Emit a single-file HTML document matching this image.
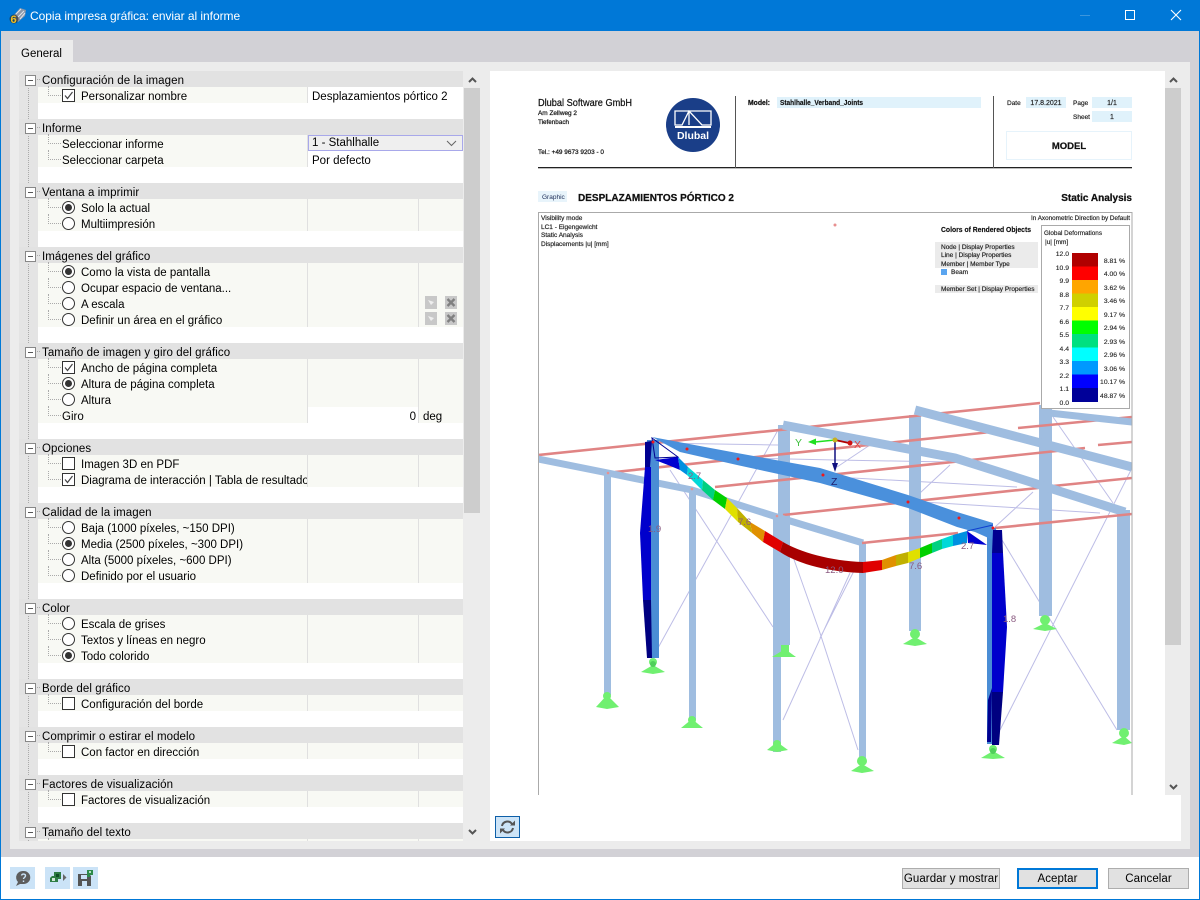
<!DOCTYPE html>
<html lang="es"><head><meta charset="utf-8"><title>Copia impresa gráfica</title>
<style>
*{box-sizing:border-box}
html,body{margin:0;padding:0;width:1200px;height:900px;overflow:hidden;background:#fff;font-family:"Liberation Sans",sans-serif;font-size:11.5px;color:#000}
.a{position:absolute}
#tree{position:absolute;left:19px;top:71px;width:444px;height:770px;overflow:hidden;background:#fff}
#gut{position:absolute;left:0;top:0;width:19px;height:770px;background:#e4e4e4}
#gut:after{content:"";position:absolute;left:9px;top:8px;height:770px;border-left:1px dotted #aaa}
.h{position:relative;height:16px;background:#e2e2e2;padding-left:23px;line-height:20px;white-space:nowrap;letter-spacing:.08px}
.h:before{content:"";position:absolute;left:6px;top:4px;width:9px;height:9px;border:1px solid #888;background:linear-gradient(#555,#555) center/5px 1px no-repeat #fff;z-index:2}
.h:after{content:"";position:absolute;left:15px;top:8px;width:6px;border-top:1px dotted #aaa}
.r{position:relative;height:16px;margin-left:19px;background:#f8f9f4;padding-left:24px;line-height:20px;white-space:nowrap}
.r:before{content:"";position:absolute;left:10px;top:-1px;width:12px;height:9px;border-left:1px dotted #aaa;border-bottom:1px dotted #aaa}
.k{padding-left:43px}
.b{height:16px}
.s:after{content:"";position:absolute;left:269px;top:0;height:16px;border-left:1px solid #e0e0e0}
.s2{position:absolute;left:380px;top:0;height:16px;border-left:1px solid #e0e0e0}
.v{position:absolute;left:270px;top:0;width:155px;height:16px;background:#fff;padding-left:4px;z-index:1}
.c,.o{position:absolute;left:24px;top:2px;width:13px;height:13px;background:#fff;border:1px solid #333}
.o{border-radius:50%}
.o.on:after{content:"";position:absolute;left:2px;top:2px;width:7px;height:7px;border-radius:50%;background:#333}
.c svg{position:absolute;left:0;top:0}
.btn{position:absolute;top:868px;height:21px;background:#e1e1e1;border:1px solid #adadad;text-align:center;line-height:21px;letter-spacing:.05px;white-space:nowrap}
.ib{position:absolute;top:867px;width:25px;height:22px;background:#cbe3f7}
.sb{position:absolute;background:#ececec;width:16px}
.th{position:absolute;background:#cdcdcd;width:16px}
.rep{filter:blur(.3px)}
.rep text{font-family:"Liberation Sans",sans-serif}
</style></head><body>
<div class="a" style="left:0;top:0;width:1200px;height:900px;border:1px solid #0078d7;border-top:0"></div>
<div class="a" style="left:0;top:0;width:1200px;height:31px;background:#0078d7"></div>
<svg class="a" style="left:9px;top:7px" width="17" height="17" viewBox="0 0 17 17"><path d="M5 8 L11 1 L17 3 L16 9 L9 15 L6 13Z" fill="#8b96a8"/><path d="M7 7L12 2M9 10L15 4M11 12L16 6" stroke="#dfe4ec" stroke-width="1"/><circle cx="5" cy="12" r="4.500" fill="#222" opacity=".6"/><text x="1.500" y="16" font-size="11" font-weight="bold" fill="#f4c020" font-family="Liberation Sans">6</text></svg>
<div class="a" style="left:30px;top:9px;color:#fff;font-size:12px;letter-spacing:-.05px;white-space:nowrap">Copia impresa gráfica: enviar al informe</div>
<div class="a" style="left:1080px;top:15px;width:10px;height:1px;background:#3c96dd"></div>
<div class="a" style="left:1125px;top:10px;width:10px;height:10px;border:1px solid #fff"></div>
<svg class="a" style="left:1170px;top:9px" width="12" height="12"><path d="M1 1L11 11M11 1L1 11" stroke="#fff" stroke-width="1.100"/></svg>

<div class="a" style="left:1px;top:31px;width:1198px;height:826px;background:#d2d1d6"></div>
<div class="a" style="left:10px;top:40px;width:63px;height:23px;background:#ececec;padding:8px 0 0 11px">General</div>
<div class="a" style="left:10px;top:62px;width:1180px;height:787px;background:#ececec"></div>

<div id="tree"><div id="gut"></div>
<div class="h">Configuración de la imagen</div>
<div class="r k s"><i class="c"><svg width="11" height="11"><path d="M2 5.500L4.500 8.500L9.500 2" fill="none" stroke="#444" stroke-width="1.200"/></svg></i>Personalizar nombre<span class="v">Desplazamientos pórtico 2</span></div>
<div class="b"></div>
<div class="h">Informe</div>
<div class="r s">Seleccionar informe<span class="v" style="background:#efefef;border:1px solid #a8a8ea;padding-left:3px;line-height:15px">1 - Stahlhalle<svg class="a" style="right:5px;top:4px" width="11" height="7"><path d="M1 1L5.500 5.500L10 1" fill="none" stroke="#666"/></svg></span></div>
<div class="r s">Seleccionar carpeta<span class="v">Por defecto</span></div>
<div class="b"></div>
<div class="h">Ventana a imprimir</div>
<div class="r k s"><i class="o on"></i>Solo la actual<b class="s2"></b></div>
<div class="r k s"><i class="o"></i>Multiimpresión<b class="s2"></b></div>
<div class="b"></div>
<div class="h">Imágenes del gráfico</div>
<div class="r k s"><i class="o on"></i>Como la vista de pantalla<b class="s2"></b></div>
<div class="r k s"><i class="o"></i>Ocupar espacio de ventana...<b class="s2"></b></div>
<div class="r k s"><i class="o"></i>A escala<b class="s2"></b></div>
<div class="r k s"><i class="o"></i>Definir un área en el gráfico<b class="s2"></b></div>
<div class="b"></div>
<div class="h">Tamaño de imagen y giro del gráfico</div>
<div class="r k s"><i class="c"><svg width="11" height="11"><path d="M2 5.500L4.500 8.500L9.500 2" fill="none" stroke="#444" stroke-width="1.200"/></svg></i>Ancho de página completa<b class="s2"></b></div>
<div class="r k s"><i class="o on"></i>Altura de página completa<b class="s2"></b></div>
<div class="r k s"><i class="o"></i>Altura<b class="s2"></b></div>
<div class="r s">Giro<span class="v" style="text-align:right;width:110px;padding-right:2px">0</span><b class="s2"></b><span class="a" style="left:385px;top:0">deg</span></div>
<div class="b"></div>
<div class="h">Opciones</div>
<div class="r k s"><i class="c"></i>Imagen 3D en PDF<b class="s2"></b></div>
<div class="r k s" style="overflow:hidden"><i class="c"><svg width="11" height="11"><path d="M2 5.500L4.500 8.500L9.500 2" fill="none" stroke="#444" stroke-width="1.200"/></svg></i>Diagrama de interacción | Tabla de resultados<span class="a" style="left:270px;top:0;width:155px;height:16px;background:#f8f9f4"></span><b class="s2"></b></div>
<div class="b"></div>
<div class="h">Calidad de la imagen</div>
<div class="r k s"><i class="o"></i>Baja (1000 píxeles, ~150 DPI)<b class="s2"></b></div>
<div class="r k s"><i class="o on"></i>Media (2500 píxeles, ~300 DPI)<b class="s2"></b></div>
<div class="r k s"><i class="o"></i>Alta (5000 píxeles, ~600 DPI)<b class="s2"></b></div>
<div class="r k s"><i class="o"></i>Definido por el usuario<b class="s2"></b></div>
<div class="b"></div>
<div class="h">Color</div>
<div class="r k s"><i class="o"></i>Escala de grises<b class="s2"></b></div>
<div class="r k s"><i class="o"></i>Textos y líneas en negro<b class="s2"></b></div>
<div class="r k s"><i class="o on"></i>Todo colorido<b class="s2"></b></div>
<div class="b"></div>
<div class="h">Borde del gráfico</div>
<div class="r k s"><i class="c"></i>Configuración del borde<b class="s2"></b></div>
<div class="b"></div>
<div class="h">Comprimir o estirar el modelo</div>
<div class="r k s"><i class="c"></i>Con factor en dirección<b class="s2"></b></div>
<div class="b"></div>
<div class="h">Factores de visualización</div>
<div class="r k s"><i class="c"></i>Factores de visualización<b class="s2"></b></div>
<div class="b"></div>
<div class="h">Tamaño del texto</div>
<div class="r s"><b class="s2"></b></div>
</div>

<svg class="a" style="left:425px;top:296px" width="33" height="31"><g fill="#c8c8c8"><rect width="12" height="13"/><rect x="20" width="12" height="13"/><rect y="16" width="12" height="13"/><rect x="20" y="16" width="12" height="13"/></g><g stroke="#808080" stroke-width="2.400"><path d="M22.500 3L29.500 10M29.500 3L22.500 10M22.500 19L29.500 26M29.500 19L22.500 26"/></g><path d="M3 4L9 6L6 9ZM3 20L9 22L6 25Z" fill="#eee"/></svg>

<div class="sb" style="left:464px;top:71px;height:770px"></div>
<div class="th" style="left:464px;top:88px;height:425px"></div>
<svg class="a" style="left:467px;top:76px" width="11" height="8"><path d="M2 6L5.500 2.500L9 6" fill="none" stroke="#555" stroke-width="2"/></svg>
<svg class="a" style="left:467px;top:828px" width="11" height="8"><path d="M2 2L5.500 5.500L9 2" fill="none" stroke="#555" stroke-width="2"/></svg>

<div class="a" style="left:490px;top:71px;width:691px;height:770px;background:#fff"></div>
<div class="sb" style="left:1165px;top:71px;height:724px"></div>
<div class="th" style="left:1165px;top:88px;height:557px"></div>
<svg class="a" style="left:1168px;top:76px" width="11" height="8"><path d="M2 6L5.500 2.500L9 6" fill="none" stroke="#555" stroke-width="2"/></svg>
<svg class="a" style="left:1168px;top:783px" width="11" height="8"><path d="M2 2L5.500 5.500L9 2" fill="none" stroke="#555" stroke-width="2"/></svg>

<svg class="a rep" style="left:0;top:0" width="1200" height="900" viewBox="0 0 1200 900">
<defs><clipPath id="cp"><rect x="539" y="213" width="593" height="582"/></clipPath></defs>
<!-- header -->
<g fill="#111" stroke="#111" stroke-width=".22">
<text x="538" y="106" font-size="10" textLength="94" lengthAdjust="spacingAndGlyphs">Dlubal Software GmbH</text>
<text x="538" y="115" font-size="6.500" textLength="39" lengthAdjust="spacingAndGlyphs">Am Zellweg 2</text>
<text x="538" y="124" font-size="6.500" textLength="31" lengthAdjust="spacingAndGlyphs">Tiefenbach</text>
<text x="538" y="154" font-size="6.500" textLength="66" lengthAdjust="spacingAndGlyphs">Tel.: +49 9673 9203 - 0</text>
<text x="748" y="105" font-size="7" font-weight="bold" textLength="22" lengthAdjust="spacingAndGlyphs">Model:</text>
</g>
<circle cx="693" cy="125" r="27" fill="#1a3e88"/>
<path d="M675 125V111H711V125H702L689 111L682 125ZM689 111V125" fill="none" stroke="#fff" stroke-width="1.300"/>
<rect x="675" y="126" width="36" height="2" fill="#fff"/>
<text x="693" y="139" font-size="10.500" font-weight="bold" fill="#fff" text-anchor="middle">Dlubal</text>
<rect x="777" y="97" width="204" height="11" fill="#e0f2fb"/>
<text x="780" y="105" font-size="7" font-weight="bold" fill="#111" stroke="#111" stroke-width=".15" textLength="83" lengthAdjust="spacingAndGlyphs">Stahlhalle_Verband_Joints</text>
<rect x="538" y="167" width="594" height="1.300" fill="#222"/>
<rect x="735" y="96" width="1" height="72" fill="#555"/>
<rect x="993" y="96" width="1" height="72" fill="#555"/>
<g fill="#e0f2fb"><rect x="1026" y="97" width="40" height="11"/><rect x="1092" y="97" width="40" height="11"/><rect x="1092" y="111" width="40" height="11"/></g>
<g fill="#222" font-size="6.500" stroke="#222" stroke-width=".18">
<text x="1007" y="105">Date</text><text x="1073" y="105">Page</text><text x="1073" y="119">Sheet</text>
<text x="1046" y="105" text-anchor="middle" font-size="7">17.8.2021</text>
<text x="1112" y="105" text-anchor="middle" font-size="7">1/1</text><text x="1112" y="119" text-anchor="middle" font-size="7">1</text></g>
<rect x="1006.500" y="131.500" width="125" height="28" fill="none" stroke="#e6f3fb"/>
<text x="1069" y="149" font-size="9.500" font-weight="bold" text-anchor="middle" fill="#111" stroke="#111" stroke-width=".2">MODEL</text>
<rect x="538" y="191" width="29" height="11" fill="#e8f4fb"/>
<text x="542" y="199" font-size="6.500" fill="#1a2a55">Graphic</text>
<text x="578" y="201" font-size="10.500" font-weight="bold" fill="#111" stroke="#111" stroke-width=".25" textLength="156" lengthAdjust="spacingAndGlyphs">DESPLAZAMIENTOS PÓRTICO 2</text>
<text x="1132" y="201" font-size="10" font-weight="bold" fill="#111" stroke="#111" stroke-width=".25" text-anchor="end">Static Analysis</text>

<!-- 3D model -->
<g clip-path="url(#cp)">
<g fill="none" stroke="#bdbde6" stroke-width="1">
<path d="M670 470L773 627M658 648L778 430M783 720L850 573M780 520L820 633L858 750M820 638L858 563M1002 540L1117 730M1000 730L1132 468M995 527L1033 492M920 493L950 465M837 467L870 445M1053 417L1113 503M835 477L1017 487M923 502L1100 513M653 443L780 445M743 458L835 460L950 462"/>
</g>
<!-- back light columns -->
<g fill="#9fbde0">
<rect x="778" y="425" width="12" height="220"/><rect x="909" y="415" width="12" height="216"/><rect x="1039" y="405" width="13" height="211"/><rect x="1117" y="510" width="13" height="220"/>
</g>
<!-- purlins back -->
<g stroke="#e08484" stroke-width="2.600" fill="none">
<path d="M538 455L1040 403M615 472L1000 431M715 487L1085 448M783 515L1038 488M1053 486L1132 478M1018 428L1132 417M1098 445L1132 442"/>
</g>
<!-- rafters -->
<g fill="none" stroke="#9fbde0">
<path d="M915 410L1132 467" stroke-width="9"/>
<path d="M783 425L955 458L1125 512" stroke-width="9"/>
<path d="M1040 412L1132 422" stroke-width="7"/>
<path d="M538 459L608 473L692 490L777 517L863 543" stroke-width="7"/>
</g>
<g fill="#9fbde0">
<rect x="604" y="473" width="7" height="222"/><rect x="689" y="490" width="7" height="230"/><rect x="773" y="517" width="8" height="235"/><rect x="859" y="543" width="7" height="215"/>
</g>
<path d="M862 543L958 533M995 528L1132 514" stroke="#e08484" stroke-width="2.600" fill="none"/>
<!-- supports -->
<g fill="#70f070">
<path d="M596 707L607 695L619 707L607 709Z"/><circle cx="607" cy="696" r="4"/>
<path d="M681 728L692 719L703 728Z"/><circle cx="692" cy="720" r="4"/>
<path d="M767 750L777 742L788 750L777 752Z"/><circle cx="777" cy="744" r="4"/>
<path d="M772 657L785 649L796 657Z"/><rect x="781" y="645" width="8" height="8"/>
<path d="M851 771L862 764L874 771L862 773Z"/><circle cx="862" cy="761" r="5"/>
<path d="M903 644L915 637L927 644L915 646Z"/><circle cx="915" cy="634" r="5"/>
<path d="M1033 629L1045 623L1057 629L1045 631Z"/><circle cx="1045" cy="620" r="5"/>
<path d="M1112 743L1124 736L1132 743L1124 745Z"/><circle cx="1124" cy="733" r="5"/>
<path d="M641 672L653 665L665 672L653 674Z"/><circle cx="653" cy="662" r="4"/>
<path d="M981 758L993 751L1005 758L993 759Z"/><circle cx="993" cy="749" r="4"/>
</g>
<circle cx="653" cy="664" r="3" fill="#4fcf5a"/><circle cx="993" cy="751" r="3" fill="#4fcf5a"/>
<!-- front columns -->
<rect x="647" y="440" width="12" height="218" fill="#4a8dd5"/>
<rect x="987" y="528" width="9" height="216" fill="#4a8dd5"/>
<!-- main rafter -->
<path d="M652 437L737 453L820 468L908 495L957 512L993 523L993 540L975 532L957 527L908 508L820 483L737 465L680 452Z" fill="#4a90dc"/>
<!-- left deformed column -->
<path d="M645 467L640 533L643 600L651 600L651 467Z" fill="#0000cc"/>
<path d="M645 442L652 441L650 467L645 467Z" fill="#000090"/>
<path d="M643 600L651 600L652 658L647 658Z" fill="#000080"/>
<path d="M652 438L678 457L655 458Z" fill="none" stroke="#000090" stroke-width="1"/>
<!-- right deformed column -->
<path d="M993 530L1002 530L1003 553L992 553Z" fill="#000090"/>
<path d="M992 553L1003 553L1007 627L1003 692L992 692Z" fill="#0000cc"/>
<path d="M992 692L1003 692L999 745L992 745Z" fill="#000080"/>
<path d="M987 742L991 742L992 688L988 700Z" fill="#000090"/>
<!-- deformed beam -->
<path d="M655 460L678 457L680 470L668 465Z" fill="#0000d0"/>
<path d="M678 457L688 467L687 475L680 470Z" fill="#0090e0"/>
<path d="M688 467L703 480L702 490L687 475Z" fill="#00d8d8"/>
<path d="M703 480L715 490L713 500L702 490Z" fill="#00d080"/>
<path d="M715 490L727 498L725 509L713 500Z" fill="#00d000"/>
<path d="M727 498L737 508L738 522L725 509Z" fill="#e0e000"/>
<path d="M737 508L750 522L752 533L738 522Z" fill="#c0b000"/>
<path d="M750 522L765 531L763 542L752 533Z" fill="#e09000"/>
<path d="M765 531L783 542L780 552L763 542Z" fill="#e00000"/>
<path d="M783 542C800 552 830 561 863 562L863 573C830 572 800 565 780 552Z" fill="#a80000"/>
<path d="M863 562L882 560L882 570L863 573Z" fill="#e00000"/>
<path d="M882 560L896 555L896 566L882 570Z" fill="#e09000"/>
<path d="M896 555L908 552L908 563L896 566Z" fill="#c0b000"/>
<path d="M908 552L920 548L920 558L908 563Z" fill="#e0e000"/>
<path d="M920 548L932 543L932 553L920 558Z" fill="#00d000"/>
<path d="M932 543L942 539L942 549L932 553Z" fill="#00d080"/>
<path d="M942 539L953 535L953 546L942 549Z" fill="#00d8d8"/>
<path d="M953 535L967 531L967 543L953 546Z" fill="#0090e0"/>
<path d="M967 531L987 545L968 543Z" fill="#0000d0"/>
<path d="M967 531L993 525" stroke="#1040d0" stroke-width="1" fill="none"/>
<!-- red dots -->
<g fill="#f01818"><circle cx="653" cy="442" r="1.500"/><circle cx="687" cy="449" r="1.500"/><circle cx="738" cy="459" r="1.500"/><circle cx="823" cy="475" r="1.500"/><circle cx="908" cy="502" r="1.500"/><circle cx="959" cy="518" r="1.500"/><circle cx="993" cy="528" r="1.500"/></g>
<g fill="#e89090"><circle cx="608" cy="473" r="1.300"/><circle cx="692" cy="489" r="1.300"/><circle cx="777" cy="516" r="1.300"/><circle cx="835" cy="225" r="1.500"/></g>
<!-- gizmo -->
<path d="M835 440L815 442" stroke="#20e020" stroke-width="1.500"/><path d="M808 442L816 438.500L816 445Z" fill="#20e020"/>
<path d="M835 440L849 443" stroke="#b00000" stroke-width="1.800"/><circle cx="850" cy="443" r="2.500" fill="#d01010"/>
<path d="M835 441V466" stroke="#101080" stroke-width="1.500"/><path d="M835 472L832 463L838 463Z" fill="#101080"/>
<circle cx="835" cy="440" r="2.500" fill="#c8b020"/>
<g font-size="10.500"><text x="795" y="446" fill="#40c040">Y</text><text x="854" y="448" fill="#e04040">X</text><text x="831" y="485" fill="#202070">Z</text></g>
<g font-size="9.500" fill="#8a5a80">
<text x="648" y="532">1.9</text><text x="688" y="479">2.7</text><text x="738" y="525">7.6</text><text x="825" y="573">12.0</text><text x="909" y="569">7.6</text><text x="961" y="549">2.7</text><text x="1003" y="622">1.8</text></g>
</g>

<!-- frame -->
<path d="M538.500 795V212.500H1132V795" fill="none" stroke="#aaa" stroke-width="1"/>
<g font-size="6.500" fill="#222" stroke="#222" stroke-width=".18">
<text x="541" y="220">Visibility mode</text><text x="541" y="229">LC1 - Eigengewicht</text><text x="541" y="237">Static Analysis</text><text x="541" y="246">Displacements |u| [mm]</text>
<text x="1130" y="220" text-anchor="end" textLength="99" lengthAdjust="spacingAndGlyphs">In Axonometric Direction by Default</text></g>
<text x="941" y="232" font-size="7" font-weight="bold" fill="#111" stroke="#111" stroke-width=".15" textLength="90" lengthAdjust="spacingAndGlyphs">Colors of Rendered Objects</text>
<rect x="935" y="242" width="103" height="26" fill="#ebebeb"/><rect x="935" y="285" width="103" height="8" fill="#ebebeb"/>
<g font-size="6.500" fill="#222" stroke="#222" stroke-width=".18">
<text x="941" y="249">Node | Display Properties</text><text x="941" y="257">Line | Display Properties</text><text x="941" y="266">Member | Member Type</text><text x="951" y="274">Beam</text><text x="941" y="291">Member Set | Display Properties</text></g>
<rect x="941" y="269" width="6" height="6" fill="#5aa5f0"/>

<!-- legend -->
<rect x="1041.500" y="225.500" width="88" height="183" fill="#fff" stroke="#aaa"/>
<text x="1044" y="235" font-size="6.500" fill="#222" stroke="#222" stroke-width=".15" textLength="58" lengthAdjust="spacingAndGlyphs">Global Deformations</text>
<text x="1045" y="244" font-size="6.500" fill="#222" stroke="#222" stroke-width=".15">|u| [mm]</text>
<g>
<rect x="1072" y="253" width="26" height="13.500" fill="#b00000"/><rect x="1072" y="266.500" width="26" height="13.500" fill="#ff0000"/><rect x="1072" y="280" width="26" height="13.500" fill="#ffa500"/><rect x="1072" y="293.500" width="26" height="13.500" fill="#d0d000"/><rect x="1072" y="307" width="26" height="13.500" fill="#ffff00"/><rect x="1072" y="320.500" width="26" height="13.500" fill="#00ff00"/><rect x="1072" y="334" width="26" height="13.500" fill="#00e080"/><rect x="1072" y="347.500" width="26" height="13.500" fill="#00ffff"/><rect x="1072" y="361" width="26" height="13.500" fill="#0099ff"/><rect x="1072" y="374.500" width="26" height="13.500" fill="#0000ff"/><rect x="1072" y="388" width="26" height="14" fill="#000099"/>
</g>
<g font-size="6.800" fill="#222" stroke="#222" stroke-width=".12" text-anchor="end">
<text x="1069" y="256">12.0</text><text x="1069" y="270">10.9</text><text x="1069" y="283">9.9</text><text x="1069" y="297">8.8</text><text x="1069" y="310">7.7</text><text x="1069" y="324">6.6</text><text x="1069" y="337">5.5</text><text x="1069" y="351">4.4</text><text x="1069" y="364">3.3</text><text x="1069" y="378">2.2</text><text x="1069" y="391">1.1</text><text x="1069" y="405">0.0</text>
<text x="1125" y="263">8.81 %</text><text x="1125" y="276">4.00 %</text><text x="1125" y="290">3.62 %</text><text x="1125" y="303">3.46 %</text><text x="1125" y="317">9.17 %</text><text x="1125" y="330">2.94 %</text><text x="1125" y="344">2.93 %</text><text x="1125" y="357">2.96 %</text><text x="1125" y="371">3.06 %</text><text x="1125" y="384">10.17 %</text><text x="1125" y="398">48.87 %</text>
</g>
</svg>

<div class="a" style="left:495px;top:816px;width:25px;height:22px;background:#cde4f7;border:1px solid #0d5fa8"></div>
<svg class="a" style="left:499px;top:819px" width="17" height="16" viewBox="0 0 17 16"><path d="M3 7A5.500 5.500 0 0 1 13 5M14 9A5.500 5.500 0 0 1 4 11" fill="none" stroke="#555" stroke-width="2"/><path d="M11 6.500H16V1.500ZM6 9.500H1V14.500Z" fill="#555"/></svg>

<div class="ib" style="left:10px"></div>
<svg class="a" style="left:14px;top:869px" width="18" height="18" viewBox="0 0 18 18"><path d="M9.500 2A6.500 6.500 0 0 1 10 15H6L2 17L4 13A6.500 6.500 0 0 1 9.500 2Z" fill="#5d5d5d"/><path d="M7.500 6.500C8 4.500 11.500 4.500 11.500 6.800C11.500 8.500 9.500 8.500 9.500 10M9.500 11.500V13" fill="none" stroke="#cbe3f7" stroke-width="1.400"/></svg>
<div class="ib" style="left:45px"></div>
<svg class="a" style="left:49px;top:870px" width="18" height="16" viewBox="0 0 18 16"><path d="M5 2H12V9H9V12H1V8L3 6H5Z" fill="#2e7d44"/><rect x="3" y="8" width="3" height="3" fill="#cfe8d6"/><rect x="7" y="4" width="3" height="3" fill="#0f4d24"/><path d="M14 4L17.500 7.500L14 11Z" fill="#666"/></svg>
<div class="ib" style="left:73px"></div>
<svg class="a" style="left:77px;top:868px" width="18" height="19" viewBox="0 0 18 19"><path d="M1 6H12L14 8V18H1Z" fill="#555"/><rect x="4" y="7" width="6" height="4" fill="#cbe3f7"/><rect x="5" y="13" width="5" height="5" fill="#cbe3f7"/><path d="M10 2H16V7H13V9H10Z" fill="#2e8b4a"/><rect x="12" y="3" width="2" height="2" fill="#b5e0c3"/></svg>

<div class="btn" style="left:902px;width:98px">Guardar y mostrar</div>
<div class="btn" style="left:1017px;width:81px;border:2px solid #0078d7;line-height:19px">Aceptar</div>
<div class="btn" style="left:1108px;width:81px">Cancelar</div>
</body></html>
